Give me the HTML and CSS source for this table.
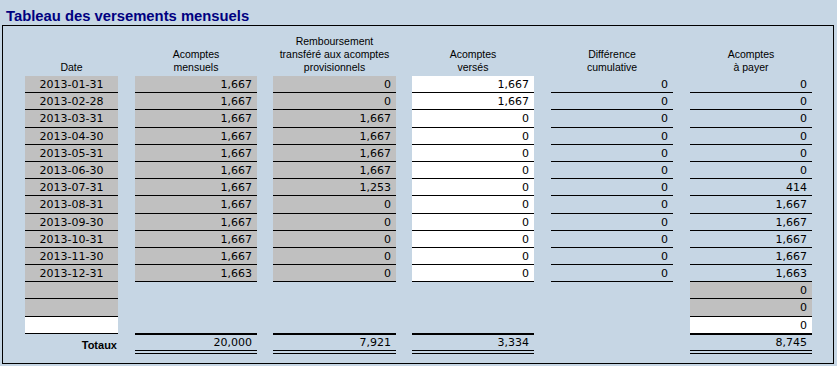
FILE: index.html
```html
<!DOCTYPE html>
<html lang="fr">
<head>
<meta charset="utf-8">
<title>Tableau des versements mensuels</title>
<link rel="stylesheet" href="styles.css">
</head>
<body>
<div class="page">
  <h1 class="title">Tableau des versements mensuels</h1>
  <div class="frame">
    <div class="sheet">
      <div class="hd date">Date</div>
      <div class="hd mens">Acomptes<br>mensuels</div>
      <div class="hd remb">Remboursement<br>transféré aux acomptes<br>provisionnels</div>
      <div class="hd vers">Acomptes<br>versés</div>
      <div class="hd diff">Différence<br>cumulative</div>
      <div class="hd pay">Acomptes<br>à payer</div>

      <div class="c date grey">2013-01-31</div><div class="c mens grey">1,667</div><div class="c remb grey">0</div><div class="c vers white">1,667</div><div class="c diff">0</div><div class="c pay">0</div>
      <div class="c date grey">2013-02-28</div><div class="c mens grey">1,667</div><div class="c remb grey">0</div><div class="c vers white">1,667</div><div class="c diff">0</div><div class="c pay">0</div>
      <div class="c date grey">2013-03-31</div><div class="c mens grey">1,667</div><div class="c remb grey">1,667</div><div class="c vers white">0</div><div class="c diff">0</div><div class="c pay">0</div>
      <div class="c date grey">2013-04-30</div><div class="c mens grey">1,667</div><div class="c remb grey">1,667</div><div class="c vers white">0</div><div class="c diff">0</div><div class="c pay">0</div>
      <div class="c date grey">2013-05-31</div><div class="c mens grey">1,667</div><div class="c remb grey">1,667</div><div class="c vers white">0</div><div class="c diff">0</div><div class="c pay">0</div>
      <div class="c date grey">2013-06-30</div><div class="c mens grey">1,667</div><div class="c remb grey">1,667</div><div class="c vers white">0</div><div class="c diff">0</div><div class="c pay">0</div>
      <div class="c date grey">2013-07-31</div><div class="c mens grey">1,667</div><div class="c remb grey">1,253</div><div class="c vers white">0</div><div class="c diff">0</div><div class="c pay">414</div>
      <div class="c date grey">2013-08-31</div><div class="c mens grey">1,667</div><div class="c remb grey">0</div><div class="c vers white">0</div><div class="c diff">0</div><div class="c pay">1,667</div>
      <div class="c date grey">2013-09-30</div><div class="c mens grey">1,667</div><div class="c remb grey">0</div><div class="c vers white">0</div><div class="c diff">0</div><div class="c pay">1,667</div>
      <div class="c date grey">2013-10-31</div><div class="c mens grey">1,667</div><div class="c remb grey">0</div><div class="c vers white">0</div><div class="c diff">0</div><div class="c pay">1,667</div>
      <div class="c date grey">2013-11-30</div><div class="c mens grey">1,667</div><div class="c remb grey">0</div><div class="c vers white">0</div><div class="c diff">0</div><div class="c pay">1,667</div>
      <div class="c date grey">2013-12-31</div><div class="c mens grey">1,663</div><div class="c remb grey">0</div><div class="c vers white">0</div><div class="c diff">0</div><div class="c pay">1,663</div>

      <div class="c date grey"></div><div class="c pay grey">0</div>
      <div class="c date grey"></div><div class="c pay grey">0</div>
      <div class="c date white"></div><div class="c pay white last">0</div>

      <div class="tlabel date">Totaux</div>
      <div class="tot mens">20,000</div>
      <div class="tot remb">7,921</div>
      <div class="tot vers">3,334</div>
      <div class="tot pay">8,745</div>
    </div>
  </div>
</div>
</body>
</html>
```
FILE: styles.css
```css
html, body {
  margin: 0;
  padding: 0;
  background: #c6d6e4;
}

.page {
  width: 837px;
  height: 366px;
  background: #c6d6e4;
}

.title {
  margin: 0;
  padding: 8px 0 0 6px;
  height: 17px;
  font-family: "Liberation Sans", Arial, sans-serif;
  font-weight: bold;
  font-size: 14.8px;
  line-height: 17px;
  color: #000080;
  white-space: nowrap;
}

.frame {
  margin-left: 2px;
  width: 808px;
  height: 337px;
  border: 1px solid #000;
  padding-left: 22px;
  box-sizing: content-box;
}

.sheet {
  display: grid;
  grid-template-columns: 93px 17px 122px 16px 123px 16px 122px 17px 122px 17px 122px;
  grid-template-rows: 50px repeat(15, 17.2px) auto;
}

.date { grid-column: 1; }
.mens { grid-column: 3; }
.remb { grid-column: 5; }
.vers { grid-column: 7; }
.diff { grid-column: 9; }
.pay  { grid-column: 11; }

.hd {
  display: flex;
  align-items: flex-end;
  justify-content: center;
  text-align: center;
  padding-bottom: 2px;
  font-family: "Liberation Sans", Arial, sans-serif;
  font-size: 10.5px;
  line-height: 13px;
  color: #000;
}

.c {
  box-sizing: border-box;
  height: 17.2px;
  border-bottom: 1px solid #000;
  padding: 1px 5px 0 0;
  font-family: "DejaVu Sans", Verdana, sans-serif;
  font-size: 11px;
  line-height: 15px;
  text-align: right;
  color: #000;
  white-space: nowrap;
}

.c.date {
  text-align: center;
  padding-right: 0;
}

.grey { background: #c0c0c0; }
.white { background: #fff; }

.c.last { border-bottom: none; }

.tot {
  margin-top: -1px;
  border-top: 2px solid #000;
  border-bottom: 4px double #000;
  height: 15px;
  padding-right: 5px;
  font-family: "DejaVu Sans", Verdana, sans-serif;
  font-size: 11px;
  line-height: 15px;
  text-align: right;
  color: #000;
}

.tlabel {
  padding: 4px 1px 0 0;
  font-family: "Liberation Sans", Arial, sans-serif;
  font-weight: bold;
  font-size: 11px;
  line-height: 15px;
  text-align: right;
  color: #000;
}
```
